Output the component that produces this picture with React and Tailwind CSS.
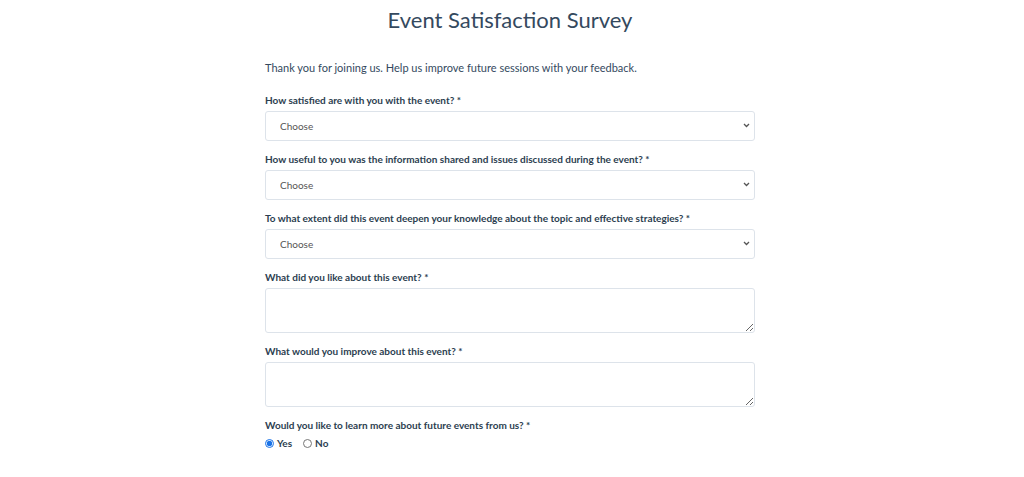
import React, { useState } from 'react';

const selectQuestions = [
  'How satisfied are with you with the event?',
  'How useful to you was the information shared and issues discussed during the event?',
  'To what extent did this event deepen your knowledge about the topic and effective strategies?',
];

const textQuestions = [
  'What did you like about this event?',
  'What would you improve about this event?',
];

const Label = ({ children }) => (
  <label className="block text-[10px] font-bold text-[#2c3e50] leading-[14px] mb-[4px]">
    {children} <span className="text-[#2c3e50]">*</span>
  </label>
);

const App = () => {
  const [learnMore, setLearnMore] = useState('yes');

  return (
    <div className="w-[1020px] min-h-[477px] bg-white" style={{ fontFamily: 'Lato, "Noto Sans", sans-serif' }}>
      <div className="mx-auto w-[490px] pt-[6px]">
        <h1 className="text-center text-[22px] leading-[28px] text-[#34495e]">Event Satisfaction Survey</h1>

        <p className="mt-[27px] text-[11px] leading-[14px] text-[#34495e]">
          Thank you for joining us. Help us improve future sessions with your feedback.
        </p>

        <div className="mt-[18px] flex flex-col gap-[11px]">
          {selectQuestions.map((q) => (
            <div key={q}>
              <Label>{q}</Label>
              <div className="relative">
                <select className="block w-full h-[30px] appearance-none rounded-[3px] border border-[#dde3ea] bg-white pl-[14px] text-[10px] text-[#555] outline-none">
                  <option>Choose</option>
                </select>
                <svg className="pointer-events-none absolute right-[5px] top-[12px]" width="7" height="5" viewBox="0 0 7 5">
                  <path d="M1 1 L3.5 3.5 L6 1" fill="none" stroke="#555" strokeWidth="1.3" />
                </svg>
              </div>
            </div>
          ))}

          {textQuestions.map((q) => (
            <div key={q}>
              <Label>{q}</Label>
              <textarea className="block w-full h-[45px] rounded-[3px] border border-[#dde3ea] bg-white outline-none" />
            </div>
          ))}

          <div>
            <Label>Would you like to learn more about future events from us?</Label>
            <div className="flex items-center gap-[11px] h-[14px] text-[10px] font-bold text-[#2c3e50]">
              <label className="flex items-center gap-[3px]">
                <input
                  type="radio"
                  name="learn"
                  checked={learnMore === 'yes'}
                  onChange={() => setLearnMore('yes')}
                  className="m-0 h-[9px] w-[9px] accent-[#1a73e8]"
                />
                Yes
              </label>
              <label className="flex items-center gap-[3px]">
                <input
                  type="radio"
                  name="learn"
                  checked={learnMore === 'no'}
                  onChange={() => setLearnMore('no')}
                  className="m-0 h-[9px] w-[9px] accent-[#1a73e8]"
                />
                No
              </label>
            </div>
          </div>
        </div>
      </div>
    </div>
  );
};

export default App;
